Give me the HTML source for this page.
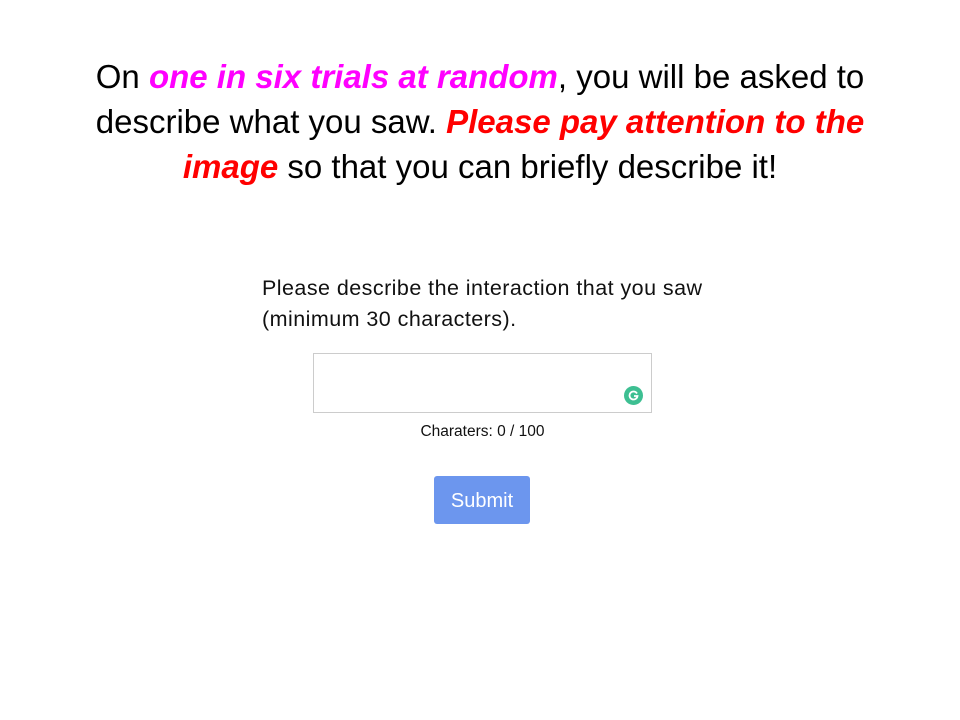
<!DOCTYPE html>
<html><head><style>
body{margin:0;width:960px;height:720px;background:#fff;position:relative;font-family:"Liberation Sans",sans-serif;overflow:hidden}
.t{position:absolute;left:0;width:960px;text-align:center;font-size:33px;line-height:45px;top:54px;color:#000}
.m{color:#ff00ff;font-weight:bold;font-style:italic}
.r{color:#ff0000;font-weight:bold;font-style:italic}
.q{position:absolute;left:262px;top:273px;font-size:21.5px;line-height:31px;color:#111;white-space:nowrap;letter-spacing:0.45px}
.ta{position:absolute;left:313px;top:353px;width:337px;height:58px;border:1px solid #ccc;box-sizing:content-box}
.g{position:absolute;left:624px;top:386px;width:19px;height:19px;border-radius:50%;background:#3dbf92}
.c{position:absolute;left:0;width:965px;text-align:center;top:423px;font-size:15.5px;color:#111}
.b{position:absolute;left:434px;top:476px;width:96px;height:48px;background:#6c96ee;border-radius:3px;color:#fff;font-size:20px;line-height:50px;text-align:center}
</style></head><body>
<div class="t">On <span class="m">one in six trials at random</span>, you will be asked to<br>describe what you saw. <span class="r">Please pay attention to the</span><br><span class="r">image</span> so that you can briefly describe it!</div>
<div class="q">Please describe the interaction that you saw<br>(minimum 30 characters).</div>
<div class="ta"></div>
<div class="g"><svg width="19" height="19" viewBox="0 0 19 19"><path d="M13 7.5A4 4 0 1 0 13.5 10H10" fill="none" stroke="#fff" stroke-width="1.8"/></svg></div>
<div class="c">Charaters: 0 / 100</div>
<div class="b">Submit</div>
</body></html>
